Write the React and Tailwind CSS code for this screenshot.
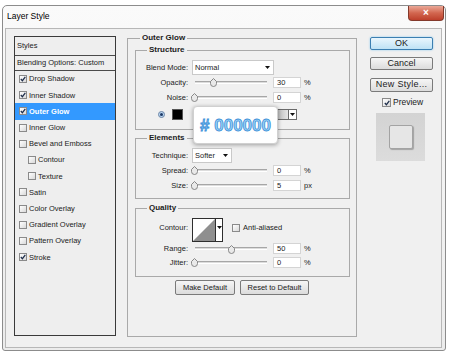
import React from 'react';

const styleRows = [
  { name: 'Drop Shadow', checked: true },
  { name: 'Inner Shadow', checked: true },
  { name: 'Outer Glow', checked: true, active: true },
  { name: 'Inner Glow' },
  { name: 'Bevel and Emboss' },
  { name: 'Contour', sub: true },
  { name: 'Texture', sub: true },
  { name: 'Satin' },
  { name: 'Color Overlay' },
  { name: 'Gradient Overlay' },
  { name: 'Pattern Overlay' },
  { name: 'Stroke', checked: true },
];

function Check({ checked, className = '' }) {
  return (
    <span
      className={`flex h-[8px] w-[8px] shrink-0 items-center justify-center border border-[#8a8a8a] bg-gradient-to-br from-white to-[#d9d9d9] ${className}`}
    >
      {checked && (
        <svg viewBox="0 0 6 6" className="h-[6px] w-[6px]">
          <path d="M0.8 3 L2.4 4.7 L5.3 0.9" fill="none" stroke="#1d2d4a" strokeWidth="1.2" />
        </svg>
      )}
    </span>
  );
}

function Caret() {
  return (
    <svg viewBox="0 0 5 3" className="h-[3px] w-[5px]">
      <path d="M0 0 H5 L2.5 3 Z" fill="#111" />
    </svg>
  );
}

function Thumb({ left }) {
  return (
    <svg viewBox="0 0 7 9" className="absolute top-[3px] h-[9px] w-[7px]" style={{ left }}>
      <path
        d="M3.5 0.5 L6.5 3.5 V5.5 A3 3 0 0 1 0.5 5.5 V3.5 Z"
        fill="#e9e9e9"
        stroke="#7c7c7c"
        strokeWidth="0.9"
      />
    </svg>
  );
}

function SliderRow({ label, value, pos, unit = '%', className = 'h-[15px]' }) {
  return (
    <div className={`flex items-center ${className}`}>
      <span className="w-[52px] text-right">{label}</span>
      <div className="relative ml-[3px] flex h-full w-[80px] items-center">
        <div className="ml-[4px] h-[3px] w-[72px] border-t border-b border-t-[#a6a6a6] border-b-white bg-[#dcdcdc]" />
        <Thumb left={pos} />
      </div>
      <div className="ml-[2px] h-[11px] w-[28px] border border-[#d4d4d4] bg-white pl-[3px] leading-[9px]">
        {value}
      </div>
      <span className="ml-[3px]">{unit}</span>
    </div>
  );
}

function Legend({ children, className = 'ml-[11px]' }) {
  return (
    <span className={`-mt-[6px] block w-fit bg-[#f0f0f0] px-[2px] text-[8px] font-bold leading-[10px] ${className}`}>
      {children}
    </span>
  );
}

function GrayButton({ children, className = '' }) {
  return (
    <div
      className={`flex items-center justify-center rounded-[2px] border border-[#7a7a7a] bg-gradient-to-b from-[#f6f6f6] to-[#dcdcdc] ${className}`}
    >
      {children}
    </div>
  );
}

export default function App() {
  return (
    <div className="h-[353px] w-[450px] overflow-hidden bg-white pt-[5px] pl-[2px] font-['Liberation_Sans',Arial,sans-serif] text-[7.5px] text-[#1b1b1b]">
      <div className="relative h-[346px] w-[444px] rounded-t-[5px] rounded-b-[3px] border border-[#8c8c8c] bg-gradient-to-b from-[#fafafa] to-[#ececec]">
        {/* title bar */}
        <div className="flex h-[22px] items-start justify-between">
          <span className="mt-[5px] pl-[4px] text-[8.5px] leading-[10px] text-black">Layer Style</span>
          <div className="mr-[1px] flex h-[15px] w-[36px] items-center justify-center rounded-b-[4px] border border-t-0 border-[#83392b] bg-gradient-to-b from-[#eaa898] via-[#d2664f] to-[#bd3f2b] text-[10px] font-bold leading-none text-white">
            ×
          </div>
        </div>

        {/* content */}
        <div className="ml-[2px] flex h-[320px] w-[437px] border border-[#b7b7b7] bg-[#f0f0f0]">
          {/* styles list */}
          <div className="mt-[7px] ml-[8px] h-[300px] w-[102px] border border-[#3a3a3a] bg-[#eeeeee]">
            <div className="h-[19px] border-b border-[#4a4a4a] pt-[4px] pl-[2px] leading-[9px]">Styles</div>
            <div className="flex h-[15px] items-center border-b border-[#4a4a4a] pl-[2px]">
              Blending Options: Custom
            </div>
            {styleRows.map((r) => (
              <div
                key={r.name}
                className={`flex h-[16.2px] items-center gap-[2px] ${r.sub ? 'pl-[13px]' : 'pl-[4px]'} ${
                  r.active ? 'bg-[#3399ff] font-bold text-white' : ''
                }`}
              >
                <Check checked={r.checked} />
                <span>{r.name}</span>
              </div>
            ))}
          </div>

          {/* outer glow group */}
          <div className="mt-[9px] ml-[11px] h-[299px] w-[230px] border border-[#a9a9a9]">
            <Legend className="ml-[12px]">Outer Glow</Legend>

            {/* structure */}
            <div className="mt-[7px] ml-[7px] h-[80px] w-[215px] border border-[#a9a9a9]">
              <Legend>Structure</Legend>
              <div className="mt-[5px] flex h-[15px] items-center">
                <span className="w-[52px] text-right">Blend Mode:</span>
                <div className="ml-[4px] flex h-[15px] w-[82px] items-center justify-between border border-[#c9c9c9] bg-white pr-[3px] pl-[2px]">
                  <span>Normal</span>
                  <Caret />
                </div>
              </div>
              <SliderRow label="Opacity:" value="30" pos={19} />
              <SliderRow label="Noise:" value="0" pos={0} />
              <div className="mt-[2px] flex h-[15px] items-center">
                <span className="ml-[22px] flex h-[7px] w-[7px] items-center justify-center rounded-full border border-[#6f86a6] bg-[#b9d6f2]">
                  <span className="h-[3px] w-[3px] rounded-full bg-[#1e3a66]" />
                </span>
                <span className="ml-[7px] h-[11px] w-[11px] border border-[#555] bg-black" />
                <div className="ml-[66px] h-[11px] w-[40px] border border-[#6a6a6a] bg-gradient-to-r from-black via-[#9a9a9a] to-[#e6e6e6]" />
                <div className="flex h-[11px] w-[8px] items-center justify-center border border-l-0 border-[#6a6a6a] bg-white">
                  <Caret />
                </div>
              </div>
            </div>

            {/* elements */}
            <div className="mt-[8px] ml-[7px] h-[61px] w-[215px] border border-[#a9a9a9]">
              <Legend>Elements</Legend>
              <div className="mt-[5px] flex h-[15px] items-center">
                <span className="w-[52px] text-right">Technique:</span>
                <div className="ml-[4px] flex h-[15px] w-[40px] items-center justify-between border border-[#c9c9c9] bg-white pr-[3px] pl-[2px]">
                  <span>Softer</span>
                  <Caret />
                </div>
              </div>
              <SliderRow label="Spread:" value="0" pos={0} />
              <SliderRow label="Size:" value="5" pos={0} unit="px" />
            </div>

            {/* quality */}
            <div className="mt-[9px] ml-[7px] h-[69px] w-[215px] border border-[#a9a9a9]">
              <Legend>Quality</Legend>
              <div className="mt-[5px] flex h-[24px] items-start">
                <span className="mt-[5px] w-[52px] text-right leading-[10px]">Contour:</span>
                <div className="ml-[4px] flex h-[24px] w-[31px] border border-[#2e2e2e] bg-white">
                  <svg viewBox="0 0 22 22" className="h-[22px] w-[22px]">
                    <path d="M0 22 L22 0 V22 Z" fill="#8f8f8f" />
                  </svg>
                  <div className="flex w-[7px] items-start justify-center border-l border-[#2e2e2e] pt-[7px]">
                    <Caret />
                  </div>
                </div>
                <Check className="mt-[6px] ml-[9px]" />
                <span className="mt-[5px] ml-[3px] leading-[10px]">Anti-aliased</span>
              </div>
              <SliderRow label="Range:" value="50" pos={37} className="h-[13px]" />
              <SliderRow label="Jitter:" value="0" pos={0} />
            </div>

            <div className="mt-[3px] flex justify-center gap-[5px]">
              <GrayButton className="h-[15px] w-[60px]">Make Default</GrayButton>
              <GrayButton className="h-[15px] w-[69px]">Reset to Default</GrayButton>
            </div>
          </div>

          {/* right column */}
          <div className="mt-[8px] ml-[13px] w-[63px] text-[9px]">
            <div className="flex h-[13px] items-center justify-center rounded-[2px] border border-[#3c7fb1] bg-gradient-to-b from-[#eaf6fd] to-[#bfe2f5] shadow-[0_0_2px_#7fc4ee]">
              OK
            </div>
            <GrayButton className="mt-[7px] h-[13px]">Cancel</GrayButton>
            <GrayButton className="mt-[8px] h-[14px] tracking-[0.3px]">New Style...</GrayButton>
            <div className="mt-[5px] flex h-[11px] items-center text-[8.5px]">
              <Check checked className="ml-[12px] h-[9px] w-[9px]" />
              <span className="ml-[2px]">Preview</span>
            </div>
            <div className="mt-[5px] ml-[6px] flex h-[48px] w-[49px] items-center justify-center bg-gradient-to-b from-[#d3d3d3] to-[#dcdcdc]">
              <div className="h-[24px] w-[24px] rounded-[2px] border border-[#a3a3a3] bg-[#e6e6e6] shadow-[1px_1px_1px_rgba(0,0,0,0.25)]" />
            </div>
          </div>
        </div>

        {/* colour popup */}
        <div className="absolute top-[100px] left-[190px] flex h-[38px] w-[85px] items-center justify-center rounded-[4px] border border-[#d0d0d0] bg-white text-[17px] font-bold leading-none text-[#9dd3f6] shadow-[0_1px_4px_rgba(0,0,0,0.35)] [-webkit-text-stroke:0.8px_#3a8fd8]">
          # 000000
        </div>
      </div>
    </div>
  );
}
